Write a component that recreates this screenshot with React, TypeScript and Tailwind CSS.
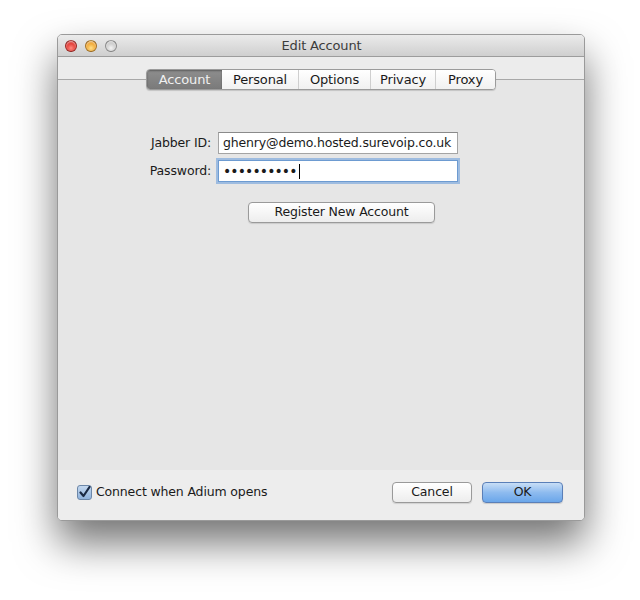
const font = { fontFamily: '"DejaVu Sans", "Liberation Sans", sans-serif' };

const tabs = ["Account", "Personal", "Options", "Privacy", "Proxy"];
const tabWidths = ["w-[75px]", "w-[76px]", "w-[72px]", "w-[65px]", "w-[60px]"];

const Light = ({ color }: { color: string }) => (
  <div className={`w-[12px] h-[12px] rounded-full border border-black/30 ${color} shadow-[inset_0_1px_2px_rgba(255,255,255,0.7)]`}></div>
);

const App = () => {
  return (
    <div className="w-[640px] h-[600px] bg-white pt-[34px] pl-[57px] text-[12.5px] tracking-[-0.15px] text-[#1a1a1a]" style={font}>
      <div className="w-[528px] h-[487px] flex flex-col rounded-[5px] overflow-hidden border border-[#9a9a9a] bg-[#ececec] shadow-[0_22px_40px_rgba(0,0,0,0.55)]">
        {/* title bar */}
        <div className="h-[22px] shrink-0 flex items-center relative bg-gradient-to-b from-[#ebebeb] to-[#cfcfcf] border-b border-[#9c9c9c]">
          <div className="flex items-center gap-[8px] pl-[7px]">
            <Light color="bg-[radial-gradient(circle_at_50%_70%,#ff8a80,#e0302a_60%,#a8201c)]" />
            <Light color="bg-[radial-gradient(circle_at_50%_70%,#ffe08a,#f0a22a_60%,#b87514)]" />
            <Light color="bg-[radial-gradient(circle_at_50%_70%,#f4f4f4,#c8c8c8_60%,#a0a0a0)]" />
          </div>
          <div className="flex-1 text-center pr-[58px] text-[13px] text-[#3c3c3c]">Edit Account</div>
        </div>

        {/* tab pane */}
        <div className="mt-[22px] h-[391px] shrink-0 border-t border-[#a8a8a8] bg-[#e6e6e6] flex flex-col items-center">
          <div className="-mt-[11px] flex h-[21px] rounded-[4px] border border-[#9b9b9b] bg-white shadow-[0_1px_1px_rgba(0,0,0,0.15)] overflow-hidden">
            {tabs.map((t, i) => (
              <div
                key={t}
                className={`${tabWidths[i]} flex items-center justify-center text-[13px] ${
                  i === 0
                    ? "bg-gradient-to-b from-[#8e8e8e] to-[#7a7a7a] text-[#f0f0f0] shadow-[inset_0_1px_2px_rgba(0,0,0,0.35)]"
                    : "bg-gradient-to-b from-white to-[#f1f1f1] text-[#1a1a1a]"
                } ${i > 1 ? "border-l border-[#cfcfcf]" : ""}`}
              >
                {t}
              </div>
            ))}
          </div>

          <div className="self-start mt-[42px] grid grid-cols-[153px_240px] gap-x-[7px] gap-y-[6px] items-center">
            <div className="text-right">Jabber ID:</div>
            <div className="h-[22px] border border-[#a4a4a4] border-t-[#8a8a8a] bg-white flex items-center pl-[4px] whitespace-nowrap overflow-hidden">
              ghenry@demo.hosted.surevoip.co.uk
            </div>
            <div className="text-right">Password:</div>
            <div className="h-[22px] border border-[#6d9bd1] bg-white flex items-center pl-[4px] shadow-[0_0_0_2px_rgba(110,160,220,0.6)]">
              <span className="text-[14px] tracking-[-0.9px] leading-none">••••••••••</span>
              <span className="w-px h-[15px] bg-black ml-[2px]"></span>
            </div>
          </div>

          <div className="mt-[20px] ml-[41px] w-[187px] h-[21px] rounded-[4px] border border-[#9a9a9a] bg-gradient-to-b from-white to-[#ededed] shadow-[0_1px_1px_rgba(0,0,0,0.12)] flex items-center justify-center">
            Register New Account
          </div>
        </div>

        {/* bottom bar */}
        <div className="flex-1 flex items-center pl-[19px] pr-[21px] pb-[6px] bg-[#ededed]">
          <div className="w-[15px] h-[15px] rounded-[3px] border border-[#6c87a8] bg-gradient-to-b from-[#c4d8ef] to-[#8fb2dc] flex items-center justify-center">
            <svg width="13" height="13" viewBox="0 0 13 13">
              <path d="M2.5 6.5 L5.5 10 L11.5 1" fill="none" stroke="#1b2a44" strokeWidth="2.2" strokeLinecap="round" strokeLinejoin="round" />
            </svg>
          </div>
          <div className="ml-[4px]">Connect when Adium opens</div>
          <div className="flex-1"></div>
          <div className="w-[80px] h-[21px] rounded-[4px] border border-[#9a9a9a] bg-gradient-to-b from-white to-[#ededed] shadow-[0_1px_1px_rgba(0,0,0,0.12)] flex items-center justify-center">
            Cancel
          </div>
          <div className="ml-[10px] w-[81px] h-[21px] rounded-[4px] border border-[#5a7fb8] bg-gradient-to-b from-[#c8def6] via-[#8ebbef] to-[#6aa6ea] shadow-[0_1px_1px_rgba(0,0,0,0.15)] flex items-center justify-center">
            OK
          </div>
        </div>
      </div>
    </div>
  );
};

export default App;
